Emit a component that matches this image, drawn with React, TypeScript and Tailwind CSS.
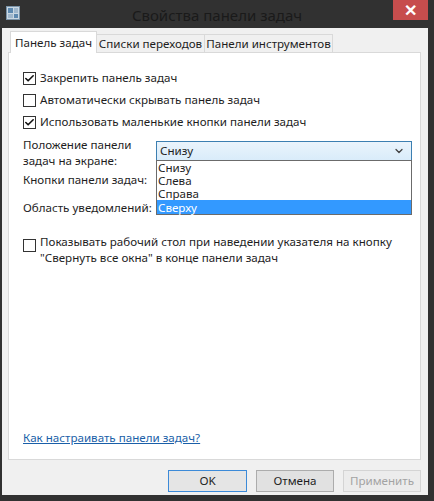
import { Check, ChevronDown } from "lucide-react"

function CheckBox({ checked }: { checked?: boolean }) {
  return (
    <span className="flex h-[13px] w-[13px] shrink-0 items-center justify-center border border-[#333333] bg-white">
      {checked && <Check className="size-[11px] text-[#111]" strokeWidth={3.5} />}
    </span>
  )
}

function CheckRow({ checked, label }: { checked?: boolean; label: string }) {
  return (
    <div className="flex h-[16px] items-center gap-[4px]">
      <CheckBox checked={checked} />
      <span>{label}</span>
    </div>
  )
}

const options = ["Снизу", "Слева", "Справа", "Сверху"]

export default function App() {
  return (
    <div className="flex h-[501px] w-[434px] flex-col bg-[#313131] font-['Noto_Sans',sans-serif] text-[11.6px] text-[#1e1e1e]">
      {/* title bar */}
      <div className="relative flex h-[28px] shrink-0 items-center justify-center">
        <div className="absolute left-[6px] top-[6px] grid h-[14px] w-[14px] grid-cols-2 gap-[1px] border border-[#7a93a8] bg-[#c9d7e3] p-[1px]">
          <span className="bg-[#5d89b0]" />
          <span className="bg-[#9fb7cc]" />
          <span className="bg-[#9fb7cc]" />
          <span className="bg-[#5d89b0]" />
        </div>
        <span className="mt-[2px] text-[15px] text-[#1a1a1a]">Свойства панели задач</span>
        <div className="absolute right-[6px] top-0 flex h-[20px] w-[35px] items-center justify-center bg-[#c74d4d] text-[16px] font-bold text-white">
          ✕
        </div>
      </div>

      {/* client */}
      <div className="mb-[6px] ml-[2px] mr-[6px] flex flex-1 flex-col bg-[#f0f0f0] pl-[6px] pr-[7px]">
        {/* tabs */}
        <div className="flex h-[24px] items-end whitespace-nowrap pl-[2px] pt-[3px]">
          <div className="relative z-10 -mb-[1px] flex h-[22px] w-[87px] items-center justify-center border border-b-0 border-[#d9d9d9] bg-white">
            Панель задач
          </div>
          <div className="flex h-[18px] w-[108px] items-center justify-center border border-b-0 border-l-0 border-[#d9d9d9] bg-[#f0f0f0]">
            Списки переходов
          </div>
          <div className="flex h-[18px] w-[128px] items-center justify-center border border-b-0 border-l-0 border-[#d9d9d9] bg-[#f0f0f0]">
            Панели инструментов
          </div>
        </div>

        {/* panel */}
        <div className="relative flex h-[408px] flex-col border border-[#d9d9d9] bg-white pl-[14px] pr-[8px] pt-[17px]">
          <div className="flex flex-col gap-[6px]">
            <CheckRow checked label="Закрепить панель задач" />
            <CheckRow label="Автоматически скрывать панель задач" />
            <CheckRow checked label="Использовать маленькие кнопки панели задач" />
          </div>

          <div className="mt-[7px] flex">
            <div className="w-[133px] leading-[16px]">
              Положение панели
              <br />
              задач на экране:
            </div>
            <div className="relative mt-[4px] h-[20px] flex-1">
              <div className="flex h-[20px] items-center justify-between border border-[#3c7fb1] bg-gradient-to-b from-[#eaf4fc] to-[#d9ecfa] pl-[3px] pr-[6px]">
                <span>Снизу</span>
                <ChevronDown className="size-[12px] text-[#404040]" strokeWidth={2.5} />
              </div>
              <div className="absolute left-0 right-0 top-[19px] z-20 flex flex-col border border-[#6b6b6b] bg-white leading-[13px]">
                {options.map((o, i) => (
                  <div
                    key={o}
                    className={
                      i === 3
                        ? "flex h-[14px] items-center bg-[#3399ff] pl-[1px] text-white"
                        : "flex h-[13px] items-center pl-[1px]"
                    }
                  >
                    {o}
                  </div>
                ))}
              </div>
            </div>
          </div>

          <div className="mt-[3px] flex h-[16px] items-center">Кнопки панели задач:</div>
          <div className="mt-[12px] flex h-[16px] items-center">Область уведомлений:</div>

          <div className="mt-[18px] flex gap-[4px]">
            <span className="mt-[5px]">
              <CheckBox />
            </span>
            <span className="leading-[16px]">
              Показывать рабочий стол при наведении указателя на кнопку
              <br />
              "Свернуть все окна" в конце панели задач
            </span>
          </div>

          <div className="mb-[13px] mt-auto">
            <span className="text-[#1a5fa8] underline">Как настраивать панели задач?</span>
          </div>
        </div>

        {/* buttons */}
        <div className="flex justify-end gap-[9px] pt-[10px]">
          <div className="flex h-[22px] w-[79px] items-center justify-center border border-[#3c8ad8] bg-[#e5e5e5]">
            OK
          </div>
          <div className="flex h-[22px] w-[78px] items-center justify-center border border-[#acacac] bg-[#e1e1e1]">
            Отмена
          </div>
          <div className="flex h-[22px] w-[78px] items-center justify-center border border-[#d4d4d4] bg-[#ececec] text-[#a3a3a3]">
            Применить
          </div>
        </div>
      </div>
    </div>
  )
}
